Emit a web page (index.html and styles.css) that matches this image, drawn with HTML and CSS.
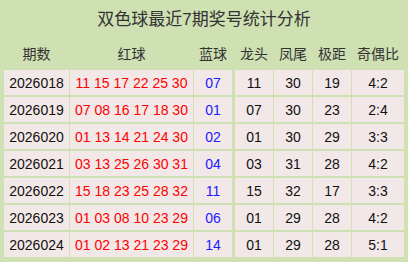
FILE: index.html
```html
<!DOCTYPE html>
<html lang="zh">
<head>
<meta charset="utf-8">
<link rel="stylesheet" href="styles.css">
</head>
<body>
<div class="panel">
  <div class="title">双色球最近7期奖号统计分析</div>
  <div class="grid">
    <div class="hd">期数</div><div class="hd">红球</div><div class="hd sep">蓝球</div><div class="hd">龙头</div><div class="hd">凤尾</div><div class="hd">极距</div><div class="hd">奇偶比</div>

    <div class="c">2026018</div><div class="c red">11 15 17 22 25 30</div><div class="c blue sep">07</div><div class="c">11</div><div class="c">30</div><div class="c">19</div><div class="c">4:2</div>
    <div class="c">2026019</div><div class="c red">07 08 16 17 18 30</div><div class="c blue sep">01</div><div class="c">07</div><div class="c">30</div><div class="c">23</div><div class="c">2:4</div>
    <div class="c">2026020</div><div class="c red">01 13 14 21 24 30</div><div class="c blue sep">02</div><div class="c">01</div><div class="c">30</div><div class="c">29</div><div class="c">3:3</div>
    <div class="c">2026021</div><div class="c red">03 13 25 26 30 31</div><div class="c blue sep">04</div><div class="c">03</div><div class="c">31</div><div class="c">28</div><div class="c">4:2</div>
    <div class="c">2026022</div><div class="c red">15 18 23 25 28 32</div><div class="c blue sep">11</div><div class="c">15</div><div class="c">32</div><div class="c">17</div><div class="c">3:3</div>
    <div class="c">2026023</div><div class="c red">01 03 08 10 23 29</div><div class="c blue sep">06</div><div class="c">01</div><div class="c">29</div><div class="c">28</div><div class="c">4:2</div>
    <div class="c">2026024</div><div class="c red">01 02 13 21 23 29</div><div class="c blue sep">14</div><div class="c">01</div><div class="c">29</div><div class="c">28</div><div class="c">5:1</div>
  </div>
</div>
</body>
</html>
```

FILE: styles.css
```css
html, body {
  margin: 0;
  padding: 0;
  background: #cfe0b2;
}
.panel {
  width: 408px;
  height: 262px;
  box-sizing: border-box;
  padding: 0 4px 4px 4px;
  background: #cfe0b2;
  font-family: "Liberation Sans", "Noto Sans CJK SC", sans-serif;
  color: #222;
}
.title {
  height: 40px;
  line-height: 40px;
  text-align: center;
  font-size: 17px;
  color: #333;
}
.grid {
  display: grid;
  grid-template-columns: 65px 123px 40px 38px 38px 38px 52px;
  grid-template-rows: 28px repeat(7, 25px);
  column-gap: 1px;
  row-gap: 2px;
}
.sep {
  margin-right: 2px;
}
.hd {
  display: flex;
  align-items: center;
  justify-content: center;
  font-size: 14px;
  color: #333;
  margin-top: -2px;
}
.c {
  display: flex;
  align-items: center;
  justify-content: center;
  background: #f2e8e8;
  font-size: 14px;
  color: #111;
}
.red { color: #ff0000; }
.blue { color: #1a1aff; }
```
